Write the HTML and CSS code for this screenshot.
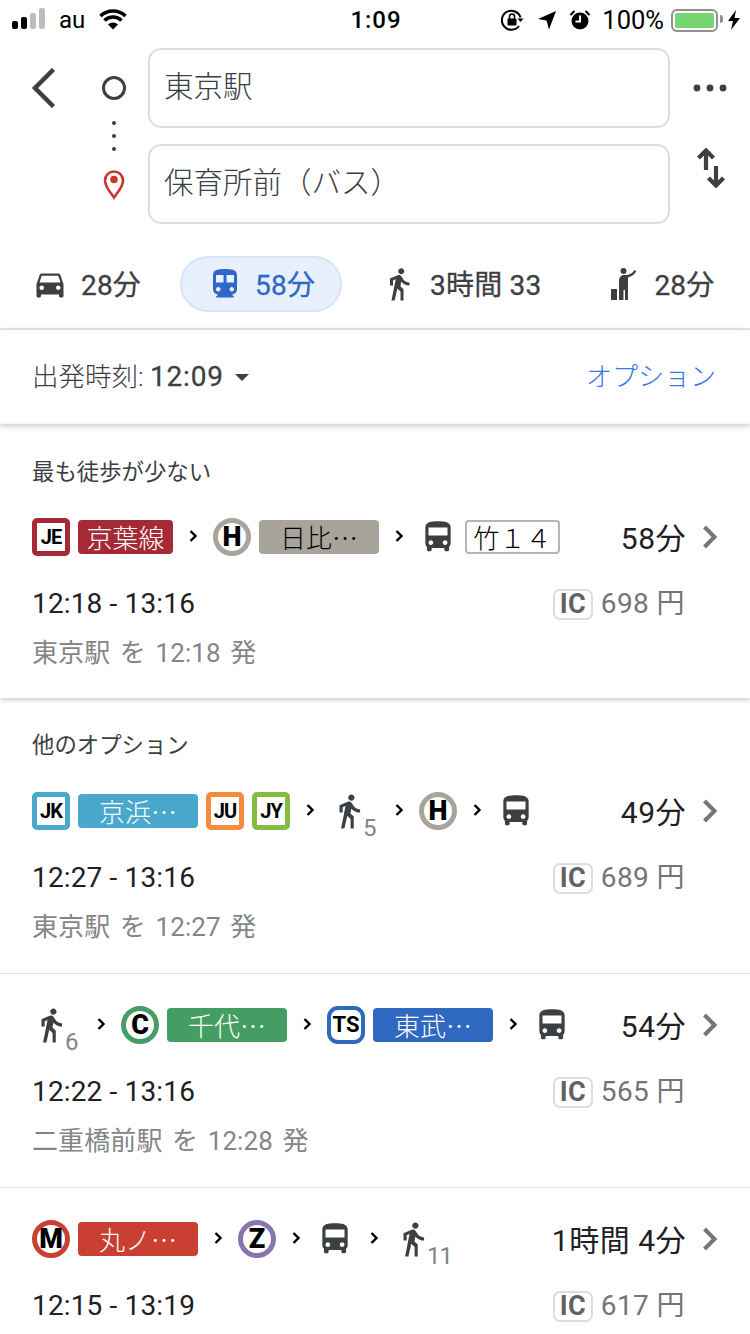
FILE: index.html
```html
<!DOCTYPE html>
<html lang="ja">

<head>
  <meta charset="UTF-8">
  <title>東京駅 - 保育所前</title>
  <link rel="stylesheet" href="styles.css">
</head>

<body>
  <svg class="defs">
    <symbol id="car" viewBox="0 0 24 24"><path d="M18.92 6.01C18.72 5.42 18.16 5 17.5 5h-11c-.66 0-1.21.42-1.42 1.01L3 12v8c0 .55.45 1 1 1h1c.55 0 1-.45 1-1v-1h12v1c0 .55.45 1 1 1h1c.55 0 1-.45 1-1v-8l-2.08-5.99zM6.5 16c-.83 0-1.5-.67-1.5-1.5S5.67 13 6.5 13s1.5.67 1.5 1.5S7.33 16 6.5 16zm11 0c-.83 0-1.5-.67-1.5-1.5s.67-1.5 1.5-1.5 1.5.67 1.5 1.5-.67 1.5-1.5 1.5zM5 11l1.5-4.5h11L19 11H5z"/></symbol>
    <symbol id="train" viewBox="0 0 24 24"><path d="M12 2c-4.42 0-8 .5-8 4v9.5C4 17.43 5.57 19 7.5 19L6 20.5v.5h12v-.5L16.5 19c1.93 0 3.5-1.57 3.5-3.5V6c0-3.5-3.58-4-8-4zM7.5 17c-.83 0-1.5-.67-1.5-1.5S6.67 14 7.5 14s1.5.67 1.5 1.5S8.33 17 7.5 17zm3.5-6H6V6h5v5zm5.5 6c-.83 0-1.5-.67-1.5-1.5s.67-1.5 1.5-1.5 1.5.67 1.5 1.5-.67 1.5-1.5 1.5zm1.5-6h-5V6h5v5z"/></symbol>
    <symbol id="walk" viewBox="0 0 24 24"><path d="M13.5 5.5c1.1 0 2-.9 2-2s-.9-2-2-2-2 .9-2 2 .9 2 2 2zM9.8 8.9L7 23h2.1l1.8-8 2.1 2v6h2v-7.5l-2.1-2 .6-3C14.8 12 16.8 13 19 13v-2c-1.9 0-3.5-1-4.3-2.4l-1-1.6c-.4-.6-1-1-1.7-1-.3 0-.5.1-.8.1L6 8.3V13h2V9.6l1.8-.7"/></symbol>
    <symbol id="bus" viewBox="0 0 24 24"><path d="M4 16c0 .88.39 1.67 1 2.22V20c0 .55.45 1 1 1h1c.55 0 1-.45 1-1v-1h8v1c0 .55.45 1 1 1h1c.55 0 1-.45 1-1v-1.78c.61-.55 1-1.34 1-2.22V6c0-3.5-3.58-4-8-4s-8 .5-8 4v10zm3.5 1c-.83 0-1.5-.67-1.5-1.5S6.67 14 7.5 14s1.5.67 1.5 1.5S8.33 17 7.5 17zm9 0c-.83 0-1.5-.67-1.5-1.5s.67-1.5 1.5-1.5 1.5.67 1.5 1.5-.67 1.5-1.5 1.5zm1.5-6H6V6h12v5z"/></symbol>
    <symbol id="hail" viewBox="-2 -2 36 36"><circle cx="16.500" cy="3" r="3"/><rect x="4" y="21" width="6" height="11"/><path d="M12 32V13c0-3.500 2-6 5-6h2c3.500 0 6.500-1.500 8.500-5l1.800 1.200c-2 3.400-4.500 5.300-8.300 6.300V32h-3V22h-1.500v10z"/></symbol>
    <symbol id="sep" viewBox="0 0 9 14"><path d="M1.500 2l5 5-5 5" fill="none" stroke="#000" stroke-width="2.400"/></symbol>
    <symbol id="more" viewBox="0 0 15 24"><path d="M1.500 2l10 10-10 10" fill="none" stroke="#757575" stroke-width="4"/></symbol>
  </svg>

  <div class="status">
    <div class="status-left">
      <svg class="signal" width="34" height="22" viewBox="0 0 34 22">
        <rect x="0" y="13" width="6" height="8" rx="2" fill="#000"/>
        <rect x="9" y="9" width="6" height="12" rx="2" fill="#000"/>
        <rect x="18" y="5" width="6" height="16" rx="2" fill="#bdbdbd"/>
        <rect x="27" y="0" width="6" height="21" rx="2" fill="#bdbdbd"/>
      </svg>
      <span>au</span>
      <svg width="28" height="22" viewBox="0 0 28 22">
        <path d="M1.500 8a18 18 0 0 1 25 0M5.500 12.500a12 12 0 0 1 17 0" fill="none" stroke="#000" stroke-width="3.600"/>
        <path d="M9 16.500a7 7 0 0 1 10 0L14 21.500z"/>
      </svg>
    </div>
    <div class="clock">1:09</div>
    <div class="status-right">
      <svg width="23" height="22" viewBox="0 0 23 22">
        <path d="M19.500 8.500A9.500 9.500 0 1 0 18 17" fill="none" stroke="#000" stroke-width="2"/>
        <path d="M16.500 9.500h6L19.500 13z"/>
        <rect x="6.500" y="9.500" width="9" height="7" rx="1"/>
        <path d="M8.500 10V7.500a2.500 2.500 0 0 1 5 0V10" fill="none" stroke="#000" stroke-width="1.600"/>
      </svg>
      <svg width="18" height="20" viewBox="0 0 18 20"><path d="M18 1L11 19.500 8.500 10.500 0 9z"/></svg>
      <svg width="20" height="20" viewBox="0 0 20 20">
        <circle cx="10" cy="11" r="8.500"/>
        <path d="M0.500 5l4-4M19.500 5l-4-4" stroke="#000" stroke-width="2"/>
        <path d="M10 5.500V11.500H5.500" fill="none" stroke="#fff" stroke-width="2"/>
      </svg>
      <span class="percent">100%</span>
      <div class="battery"><div class="battery-fill"></div></div>
      <svg class="bolt" width="12" height="20" viewBox="0 0 12 20"><path d="M8 0L0 11h5l-2 9 9-12H6.500z"/></svg>
    </div>
  </div>

  <div class="search">
    <div class="back">
      <svg width="26" height="40" viewBox="0 0 26 40"><path d="M23.500 1.500L5 20l18.500 18.500" fill="none" stroke="#3c4043" stroke-width="4.500"/></svg>
    </div>
    <svg class="route-line" width="36" height="160" viewBox="0 0 36 160">
      <circle cx="18" cy="40" r="10.500" fill="none" stroke="#3c4043" stroke-width="3"/>
      <circle cx="18" cy="75" r="2" fill="#3c4043"/>
      <circle cx="18" cy="88" r="2" fill="#3c4043"/>
      <circle cx="18" cy="101" r="2" fill="#3c4043"/>
      <path d="M18 149.500c-3-5-9-10-9-17a9 9 0 0 1 18 0c0 7-6 12-9 17z" fill="none" stroke="#c5392b" stroke-width="2.600"/>
      <circle cx="18" cy="131.500" r="3.800" fill="#c5392b"/>
    </svg>
    <div class="fields">
      <div class="field">東京駅</div>
      <div class="field">保育所前（バス）</div>
    </div>
    <div class="actions">
      <svg width="34" height="8" viewBox="0 0 34 8">
        <circle cx="4" cy="4" r="3.400" fill="#3c4043"/>
        <circle cx="17" cy="4" r="3.400" fill="#3c4043"/>
        <circle cx="30" cy="4" r="3.400" fill="#3c4043"/>
      </svg>
      <svg class="swap" width="30" height="40" viewBox="0 0 30 40">
        <path d="M2.500 10L10 2.500l7.500 7.500M10 4v18M20 18v18M12.500 30l7.500 7.500 7.500-7.500" fill="none" stroke="#3c4043" stroke-width="4.200"/>
      </svg>
    </div>
  </div>

  <div class="modes">
    <div class="mode"><svg class="mode-icon"><use href="#car"/></svg><span>28分</span></div>
    <div class="mode mode-active"><svg class="mode-icon"><use href="#train"/></svg><span>58分</span></div>
    <div class="mode"><svg class="mode-icon"><use href="#walk"/></svg><span>3時間 33</span></div>
    <div class="mode mode-last"><svg class="mode-icon"><use href="#hail"/></svg><span>28分</span></div>
  </div>

  <div class="depart">
    <div class="depart-time">出発時刻: <b>12:09</b><i class="caret"></i></div>
    <div class="options">オプション</div>
  </div>

  <div class="section section-first">
    <div class="section-title">最も徒歩が少ない</div>
    <div class="trip trip-tight">
      <div class="legs">
        <span class="shield je">JE</span><span class="line line-je">京葉線</span>
        <svg class="sep"><use href="#sep"/></svg>
        <span class="shield round hibiya">H</span><span class="line line-hibiya">日比…</span>
        <svg class="sep"><use href="#sep"/></svg>
        <svg class="leg-icon"><use href="#bus"/></svg><span class="line line-bus">竹１４</span>
        <span class="dur">58分</span>
        <svg class="more"><use href="#more"/></svg>
      </div>
      <div class="times">
        <span>12:18 - 13:16</span>
        <span class="fare"><i class="ic">IC</i>698 円</span>
      </div>
      <div class="from">東京駅 を 12:18 発</div>
    </div>
  </div>

  <div class="section-title section-title-next">他のオプション</div>

  <div class="trip">
    <div class="legs">
      <span class="shield jk">JK</span><span class="line line-jk">京浜…</span>
      <span class="shield ju">JU</span>
      <span class="shield jy">JY</span>
      <svg class="sep"><use href="#sep"/></svg>
      <svg class="leg-icon"><use href="#walk"/></svg><span class="mins">5</span>
      <svg class="sep"><use href="#sep"/></svg>
      <span class="shield round hibiya">H</span>
      <svg class="sep"><use href="#sep"/></svg>
      <svg class="leg-icon"><use href="#bus"/></svg>
      <span class="dur">49分</span>
      <svg class="more"><use href="#more"/></svg>
    </div>
    <div class="times">
      <span>12:27 - 13:16</span>
      <span class="fare"><i class="ic">IC</i>689 円</span>
    </div>
    <div class="from">東京駅 を 12:27 発</div>
  </div>

  <div class="trip">
    <div class="legs">
      <svg class="leg-icon"><use href="#walk"/></svg><span class="mins">6</span>
      <svg class="sep"><use href="#sep"/></svg>
      <span class="shield round chiyoda">C</span><span class="line line-chiyoda">千代…</span>
      <svg class="sep"><use href="#sep"/></svg>
      <span class="shield ts">TS</span><span class="line line-ts">東武…</span>
      <svg class="sep"><use href="#sep"/></svg>
      <svg class="leg-icon"><use href="#bus"/></svg>
      <span class="dur">54分</span>
      <svg class="more"><use href="#more"/></svg>
    </div>
    <div class="times">
      <span>12:22 - 13:16</span>
      <span class="fare"><i class="ic">IC</i>565 円</span>
    </div>
    <div class="from">二重橋前駅 を 12:28 発</div>
  </div>

  <div class="trip trip-last">
    <div class="legs">
      <span class="shield round marunouchi">M</span><span class="line line-marunouchi">丸ノ…</span>
      <svg class="sep"><use href="#sep"/></svg>
      <span class="shield round hanzomon">Z</span>
      <svg class="sep"><use href="#sep"/></svg>
      <svg class="leg-icon"><use href="#bus"/></svg>
      <svg class="sep"><use href="#sep"/></svg>
      <svg class="leg-icon"><use href="#walk"/></svg><span class="mins mins-wide">11</span>
      <span class="dur">1時間 4分</span>
      <svg class="more"><use href="#more"/></svg>
    </div>
    <div class="times">
      <span>12:15 - 13:19</span>
      <span class="fare"><i class="ic">IC</i>617 円</span>
    </div>
  </div>
</body>

</html>
```

FILE: styles.css
```css
* {
  margin: 0;
  padding: 0;
  box-sizing: border-box;
}

html {
  overflow: hidden;
}

body {
  width: 750px;
  height: 1334px;
  overflow: hidden;
  background: #fff;
  color: #202124;
  font-family: Roboto, "Noto Sans CJK JP", sans-serif;
}

svg {
  display: block;
  flex: none;
}

i {
  font-style: normal;
}

.defs {
  display: none;
}

/* status bar */
.status {
  display: grid;
  grid-template-columns: 1fr auto 1fr;
  align-items: center;
  height: 40px;
  padding: 0 10px 0 12px;
  color: #000;
  font-size: 24px;
}

.status-left,
.status-right {
  display: flex;
  align-items: center;
}

.status-left span {
  margin: 0 14px 0 13px;
}

.status-left svg {
  margin-top: -2px;
}

.status-right {
  justify-content: flex-end;
}

.status-right svg {
  margin-right: 14px;
}

.clock {
  font-weight: 500;
  letter-spacing: 1px;
}

.percent {
  margin: 0 7px 0 -2px;
  font-size: 25.500px;
}

.battery {
  position: relative;
  width: 47px;
  height: 23px;
  margin-right: 10px;
  padding: 2px;
  border: 2px solid #909090;
  border-radius: 6px;
}

.battery::after {
  content: "";
  position: absolute;
  top: 4px;
  right: -7px;
  width: 3px;
  height: 8px;
  background: #909090;
  border-radius: 0 3px 3px 0;
}

.battery-fill {
  height: 100%;
  background: #76d672;
  border-radius: 2px;
}

.status-right .bolt {
  margin-right: 0;
}

/* search */
.search {
  display: flex;
  align-items: flex-start;
  padding-top: 8px;
}

.back {
  display: flex;
  align-items: center;
  width: 96px;
  height: 80px;
  padding-left: 30px;
}

.fields {
  display: flex;
  flex-direction: column;
  gap: 16px;
  width: 522px;
  margin-left: 16px;
}

.field {
  height: 80px;
  padding-left: 14px;
  border: 2px solid #dcdce2;
  border-radius: 13px;
  color: #3c4043;
  font-size: 29.500px;
  font-weight: 300;
  line-height: 75px;
}

.actions {
  display: flex;
  flex-direction: column;
  align-items: center;
  flex: 1;
  padding-top: 36px;
}

.swap {
  margin-top: 56px;
  margin-left: 2px;
}

/* travel modes */
.modes {
  display: flex;
  align-items: flex-start;
  height: 74px;
  margin-top: 32px;
  padding-left: 32px;
  border-bottom: 2px solid #e6e6ec;
  color: #3c4043;
  font-size: 28px;
  letter-spacing: .2px;
  line-height: 34px;
  -webkit-text-stroke: .3px;
}

.mode {
  display: flex;
  align-items: center;
  gap: 13px;
  height: 56px;
  margin-right: 39px;
  white-space: nowrap;
}

.mode span {
  padding-top: 3px;
}

.mode svg {
  fill: #3c4043;
}

.mode-icon {
  width: 36px;
  height: 36px;
}

.mode-active {
  gap: 12px;
  width: 162px;
  padding-left: 25px;
  background: #e8f0fd;
  border: 2px solid #d6e3fa;
  border-radius: 28px;
  color: #2f68c8;
}

.mode-active svg {
  fill: #2f68c8;
}

.mode-last {
  margin-left: 25px;
  margin-right: 0;
}

/* departure */
.depart {
  position: relative;
  display: flex;
  align-items: center;
  justify-content: space-between;
  height: 94px;
  padding: 0 34px 0 32px;
  line-height: 34px;
  box-shadow: 0 2px 6px rgba(0, 0, 0, .22);
}

.depart-time {
  display: flex;
  align-items: center;
  color: #3c4043;
  font-size: 26.500px;
  font-weight: 300;
  white-space: pre;
}

.depart-time b {
  font-size: 28px;
  font-weight: 400;
  letter-spacing: .8px;
  -webkit-text-stroke: .3px;
}

.caret {
  width: 0;
  height: 0;
  margin-left: 11px;
  border-top: 7px solid #3c4043;
  border-left: 7px solid transparent;
  border-right: 7px solid transparent;
}

.options {
  color: #3b78e7;
  font-size: 26px;
  font-weight: 300;
}

/* trips */
.section-first {
  position: relative;
  box-shadow: 0 2px 5px rgba(0, 0, 0, .2);
}

.section-title {
  height: 28px;
  padding: 34px 32px 0;
  box-sizing: content-box;
  color: #3c4043;
  font-size: 22.400px;
  line-height: 28px;
}

.section-title-next {
  padding-top: 33px;
  padding-bottom: 1px;
}

.trip {
  height: 214px;
  padding-top: 32px;
  border-bottom: 1px solid #e0e0e0;
}

.trip-tight {
  height: 212px;
  border-bottom: 0;
}

.trip-last {
  height: auto;
  border-bottom: 0;
}

.legs {
  display: flex;
  align-items: center;
  height: 38px;
  padding: 0 32px;
}

.shield {
  flex: none;
  width: 38px;
  height: 38px;
  border: 5px solid;
  border-radius: 5px;
  background: #fff;
  color: #000;
  font-size: 20px;
  font-weight: 700;
  letter-spacing: -1px;
  line-height: 28px;
  text-align: center;
}

.shield + .shield {
  margin-left: 8px;
}

.round {
  border-radius: 50%;
  font-size: 27px;
  font-weight: 900;
  letter-spacing: 0;
}

.je { border-color: #a52a36; }
.jk { border-color: #4ba8cd; }
.ju { border-color: #f58b3c; }
.jy { border-color: #85bd42; }
.hibiya { border-color: #a8a49b; }
.chiyoda { border-color: #449d63; }
.marunouchi { border-color: #c93f31; }
.hanzomon { border-color: #8874ae; }

.ts {
  border: 4px solid #2f68bf;
  border-radius: 11px;
  font-size: 22px;
  letter-spacing: 0;
  line-height: 29px;
}

.line {
  flex: none;
  width: 120px;
  height: 34px;
  margin: 0 8px;
  border-radius: 4px;
  color: #fff;
  font-family: "Noto Sans CJK JP", sans-serif;
  font-size: 26px;
  font-weight: 300;
  line-height: 33px;
  text-align: center;
}

.line-je {
  width: 95px;
  background: #a52a36;
}

.line-jk { background: #4ba8cd; }
.line-chiyoda { background: #449d63; }
.line-ts { background: #2f68bf; }
.line-marunouchi { background: #c93f31; }

.line-hibiya {
  background: #a8a49b;
  color: #000;
}

.line-bus {
  width: 95px;
  margin-right: 0;
  border: 2px solid #b5b5b5;
  color: #000;
  line-height: 29px;
}

.sep {
  width: 9px;
  height: 14px;
  margin: -2px 15.500px 0;
}

.line + .sep {
  margin-left: 7.500px;
}

.leg-icon {
  width: 38px;
  height: 38px;
  fill: #3c4043;
}

.mins {
  align-self: flex-end;
  margin: 0 2.500px -10px -5px;
  color: #80868b;
  font-size: 24px;
  line-height: 24px;
}

.mins-wide {
  letter-spacing: -1px;
}

.dur {
  margin-left: auto;
  padding-top: 3px;
  font-size: 30px;
  letter-spacing: .5px;
  line-height: 38px;
  white-space: nowrap;
}

.more {
  width: 15px;
  height: 24px;
  margin-left: 17px;
}

.times {
  display: flex;
  align-items: center;
  justify-content: space-between;
  height: 34px;
  margin-top: 30px;
  padding: 2px 65px 0 32px;
  font-size: 28px;
  letter-spacing: .15px;
  line-height: 34px;
  white-space: nowrap;
}

.fare {
  display: flex;
  align-items: center;
  color: #757575;
  letter-spacing: .4px;
}

.ic {
  width: 40px;
  height: 31px;
  margin-right: 8px;
  border: 2px solid #dcdce2;
  border-radius: 7px;
  color: #5f6368;
  font-family: "Liberation Sans Narrow", Roboto, sans-serif;
  font-size: 27px;
  font-weight: 700;
  line-height: 27px;
  text-align: center;
}

.from {
  height: 34px;
  margin-top: 16px;
  padding-left: 32px;
  color: #858585;
  font-size: 26px;
  letter-spacing: .1px;
  line-height: 34px;
  word-spacing: 3px;
}
```
